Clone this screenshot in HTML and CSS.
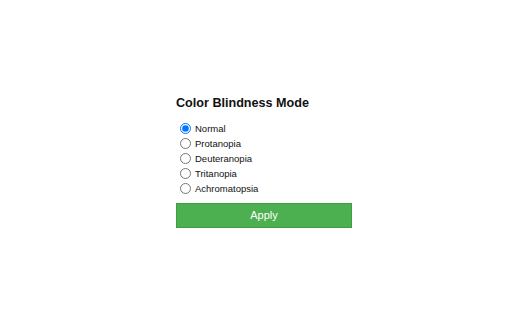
FILE: index.html
```html
<!DOCTYPE html>
<html>
<head>
<meta charset="utf-8">
<link rel="stylesheet" href="styles.css">
</head>
<body>
<div class="popup">
  <h3 class="title">Color Blindness Mode</h3>
  <div class="options">
    <label class="option"><input type="radio" name="mode" value="normal" checked><span>Normal</span></label>
    <label class="option"><input type="radio" name="mode" value="protanopia"><span>Protanopia</span></label>
    <label class="option"><input type="radio" name="mode" value="deuteranopia"><span>Deuteranopia</span></label>
    <label class="option"><input type="radio" name="mode" value="tritanopia"><span>Tritanopia</span></label>
    <label class="option"><input type="radio" name="mode" value="achromatopsia"><span>Achromatopsia</span></label>
  </div>
  <button class="apply">Apply</button>
</div>
</body>
</html>
```
FILE: styles.css
```css
html, body {
  margin: 0;
  padding: 0;
  background: #ffffff;
}
body {
  font-family: "Liberation Sans", Arial, sans-serif;
  color: #111111;
}
.popup {
  width: 176px;
  margin: 96px 0 0 176px;
  display: flex;
  flex-direction: column;
}
.title {
  margin: 0;
  font-size: 12.6px;
  line-height: 15px;
  font-weight: bold;
}
.options {
  margin-top: 10px;
  display: flex;
  flex-direction: column;
}
.option {
  display: flex;
  align-items: center;
  height: 15px;
  font-size: 9.5px;
  line-height: 15px;
}
.option input {
  width: 11px;
  height: 11px;
  margin: 0 4px 0 4px;
}
.apply {
  margin-top: 7px;
  height: 25px;
  width: 176px;
  border: 1px solid #3f9e43;
  background: #4caf50;
  color: #ffffff;
  font-family: "Liberation Sans", Arial, sans-serif;
  font-size: 11px;
  line-height: 23px;
  padding: 0;
}
```
